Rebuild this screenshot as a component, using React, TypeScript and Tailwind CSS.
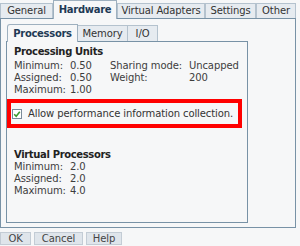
import React from "react";

const tabs = [
  { label: "General", w: "w-[53px]" },
  { label: "Hardware", w: "w-[64px]", active: true },
  { label: "Virtual Adapters", w: "w-[88px]" },
  { label: "Settings", w: "w-[51px]" },
  { label: "Other", w: "w-[40px]" },
];

const subTabs = [
  { label: "Processors", w: "w-[71px]", active: true },
  { label: "Memory", w: "w-[50px]" },
  { label: "I/O", w: "w-[30px]" },
];

function CheckBox() {
  return (
    <svg width="10" height="10" viewBox="0 0 10 10" className="shrink-0">
      <rect x="0.5" y="0.5" width="9" height="9" fill="#fff" stroke="#7a8a99" />
      <path d="M2.2 5.2 L4.2 7.2 L7.8 2.8" fill="none" stroke="#3c9a2e" strokeWidth="1.6" />
    </svg>
  );
}

function Row({ label, value }: { label: string; value: string }) {
  return (
    <>
      <div>{label}</div>
      <div>{value}</div>
    </>
  );
}

export default function App() {
  return (
    <div className="h-[246px] w-[300px] bg-[#f6f7f8] font-['DejaVu_Sans',sans-serif] text-[10px] leading-[12px] tracking-[-0.1px] text-[#3d3d3d]">
      <div className="w-[296px]">
        <div className="flex h-[18px] items-end">
          {tabs.map((t) =>
            t.active ? (
              <div
                key={t.label}
                className={`${t.w} relative z-10 -mb-px flex h-[19px] items-center justify-center border-x border-t border-[#9eb0bf] bg-[#f6f7f8] font-bold tracking-[-0.3px] text-[#1e3a55]`}
              >
                {t.label}
              </div>
            ) : (
              <div
                key={t.label}
                className={`${t.w} flex h-[15px] items-center justify-center border-l border-t border-r border-[#b4c2ce] bg-[#e6ebf0] text-[#333]`}
              >
                {t.label}
              </div>
            )
          )}
        </div>
        <div className="h-[210px] border border-[#7892a6] pl-[5px] pt-[5px]">
          <div className="flex h-[17px] items-end pl-px">
            {subTabs.map((t) =>
              t.active ? (
                <div
                  key={t.label}
                  className={`${t.w} relative z-10 -mb-px flex h-[18px] items-center justify-center rounded-tl-[3px] border-x border-t border-[#9eb0bf] bg-[#f6f7f8] font-bold tracking-[-0.3px] text-[#1e3a55]`}
                >
                  {t.label}
                </div>
              ) : (
                <div
                  key={t.label}
                  className={`${t.w} flex h-[16px] items-center justify-center border-r border-t border-[#b4c2ce] bg-[#e6ebf0] text-[#333]`}
                >
                  {t.label}
                </div>
              )
            )}
          </div>
          <div className="h-[182px] w-[242px] border border-[#7892a6] pt-[4px]">
            <div className="pl-[7px] font-bold tracking-[-0.35px] text-[#222]">Processing Units</div>
            <div className="mt-[2px] grid grid-cols-[56px_40px_79px_auto] pl-[7px]">
              <Row label="Minimum:" value="0.50" />
              <Row label="Sharing mode:" value="Uncapped" />
              <Row label="Assigned:" value="0.50" />
              <Row label="Weight:" value="200" />
              <Row label="Maximum:" value="1.00" />
            </div>
            <div className="mt-[3px] flex h-[29px] w-[235px] items-center gap-[6px] border-4 border-[#f00] pl-[1px]">
              <CheckBox />
              <span className="text-[#333]">Allow performance information collection.</span>
            </div>
            <div className="mt-[21px] pl-[7px] font-bold tracking-[-0.35px] text-[#222]">Virtual Processors</div>
            <div className="grid grid-cols-[56px_auto] pl-[7px]">
              <Row label="Minimum:" value="2.0" />
              <Row label="Assigned:" value="2.0" />
              <Row label="Maximum:" value="4.0" />
            </div>
          </div>
        </div>
        <div className="mt-[4px] flex gap-[3px]">
          {[
            ["OK", "w-[31px]"],
            ["Cancel", "w-[49px]"],
            ["Help", "w-[36px]"],
          ].map(([l, w]) => (
            <div
              key={l}
              className={`${w} flex h-[13px] items-center justify-center border border-[#c3ccd5] bg-[#dfe5eb] text-[#444]`}
            >
              {l}
            </div>
          ))}
        </div>
      </div>
    </div>
  );
}
